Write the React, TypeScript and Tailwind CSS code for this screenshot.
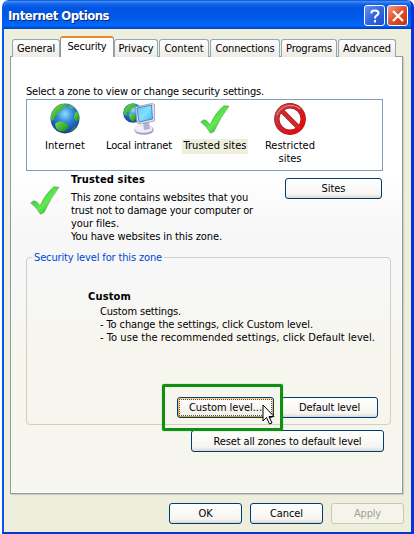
import React, { useLayoutEffect, useRef, useState } from "react";

/* Single line of dialog text, letter-spaced to fill a given pixel width. */
function Line({ w, children, className = "" }: { w: number; children: string; className?: string }) {
  const ref = useRef<HTMLSpanElement>(null);
  const [spacing, setSpacing] = useState(0);
  useLayoutEffect(() => {
    const el = ref.current;
    if (el) setSpacing((w - el.getBoundingClientRect().width) / children.length);
  }, []);
  return (
    <span ref={ref} className={`inline-block whitespace-pre ${className}`} style={{ letterSpacing: spacing }}>
      {children}
    </span>
  );
}

function Globe({ className = "" }: { className?: string }) {
  return (
    <svg viewBox="0 0 30 31" className={className}>
      <defs>
        <radialGradient id="sea" cx="0.5" cy="0.35" r="0.65">
          <stop offset="0" stopColor="#8fdcff" />
          <stop offset="0.45" stopColor="#2f86d8" />
          <stop offset="1" stopColor="#143c8c" />
        </radialGradient>
        <linearGradient id="land" x1="0" y1="0" x2="1" y2="1">
          <stop offset="0" stopColor="#7be04a" />
          <stop offset="1" stopColor="#128b1c" />
        </linearGradient>
      </defs>
      <ellipse cx="15" cy="15.5" rx="14.5" ry="15" fill="url(#sea)" />
      <path d="M1 12 Q4 3 12 1 L18 1.500 L16 4 L12 4 L13 7 L9 8 L8 11 L5 13 L4 17 L1 18Z" fill="url(#land)" />
      <path d="M19 1.500 L24 4 L22 6 L19 4Z" fill="#4dbb45" />
      <path d="M25 10 L27 8.500 L29.300 13 L29 17 L26 18 L24 15Z" fill="url(#land)" />
      <path d="M5 21 Q9 17.500 13 19 L18 21.500 L18 25 L14 28.500 L9 28 L6 25Z" fill="url(#land)" />
      <path d="M23 25 L26 22 L25 26 L20 29Z" fill="#278d38" />
    </svg>
  );
}

function Intranet() {
  return (
    <svg viewBox="0 0 32 32" className="h-8 w-8">
      <defs>
        <linearGradient id="screen" x1="0" y1="0" x2="1" y2="1">
          <stop offset="0" stopColor="#63bdf5" />
          <stop offset="0.5" stopColor="#85e0ff" />
          <stop offset="1" stopColor="#49b1ef" />
        </linearGradient>
      </defs>
      <circle cx="10" cy="10" r="9.800" fill="url(#sea)" />
      <path d="M1 8 Q4 0.500 11 0.500 L14 3 L9 5 L7 9 L4 9 L4 13 L1 12Z" fill="url(#land)" />
      <path d="M6 11 L11 11 L13 15 L10 19 L7 16Z" fill="url(#land)" />
      <ellipse cx="21" cy="27" rx="9.800" ry="4.800" fill="#a3a1c4" />
      <ellipse cx="20.500" cy="26" rx="9" ry="3.800" fill="#f1f0f8" />
      <path d="M20 19 L26 18 L27 26 L21 27Z" fill="#b4b1d2" />
      <path d="M12.500 4 L29 0.500 L31.500 1.500 L31.500 18 L16 21 L14 20Z" fill="#e4e4ef" stroke="#8a8bad" strokeWidth="0.700" />
      <path d="M14 5 L28.500 2 L29.500 16 L16 19Z" fill="url(#screen)" stroke="#2f75b9" strokeWidth="0.800" />
    </svg>
  );
}

function Check() {
  return (
    <svg viewBox="0 0 30 29" className="h-[29px] w-[30px]">
      <defs>
        <linearGradient id="tick" x1="0" y1="0" x2="1" y2="1">
          <stop offset="0" stopColor="#2fae2c" />
          <stop offset="0.55" stopColor="#5feb50" />
          <stop offset="1" stopColor="#25921f" />
        </linearGradient>
      </defs>
      <path
        d="M0.700 17 L4 14.700 Q7 15 10 20 Q16 7 24 0.800 L29 1.300 Q21 11 14 26.500 L10.500 28.200 Q6 20.500 0.700 17Z"
        fill="url(#tick)"
        stroke="#38a531"
        strokeWidth="0.6"
      />
    </svg>
  );
}

function Prohibited() {
  return (
    <svg viewBox="0 0 32 32" className="h-8 w-8">
      <defs>
        <linearGradient id="stop" x1="0" y1="0" x2="1" y2="1">
          <stop offset="0" stopColor="#c4454a" />
          <stop offset="0.5" stopColor="#cf2024" />
          <stop offset="1" stopColor="#f50000" />
        </linearGradient>
      </defs>
      <circle cx="16" cy="16" r="13.200" fill="#fff" stroke="#a81c20" strokeWidth="5.400" />
      <path d="M7 7 L25 25" stroke="#a81c20" strokeWidth="4.600" />
      <circle cx="16" cy="16" r="13.200" fill="none" stroke="url(#stop)" strokeWidth="4" />
      <path d="M6.500 6.500 L25.500 25.500" stroke="#d5262a" strokeWidth="3.200" />
      <path d="M2.800 12 Q6 4 15 2.500 Q22 2 26 6" fill="none" stroke="#e08a8c" strokeWidth="1.100" />
    </svg>
  );
}

function Tab({ label, w, className }: { label: string; w: number; className: string }) {
  return (
    <div
      className={`flex h-[18px] shrink-0 items-center justify-center rounded-t-[3px] border border-b-0 border-[#91a7b4] bg-linear-to-b from-white to-[#ecebe5] ${className}`}
    >
      <Line w={w}>{label}</Line>
    </div>
  );
}

function Button({ label, w, className = "" }: { label: string; w: number; className?: string }) {
  return (
    <button
      className={`flex shrink-0 items-center justify-center rounded-[3px] border border-[#003c74] bg-linear-to-b from-white via-[#f6f5f1] via-80% to-[#dcd8cf] ${className}`}
    >
      <Line w={w}>{label}</Line>
    </button>
  );
}

function Zone({ icon, children, className }: { icon: React.ReactNode; children: React.ReactNode; className: string }) {
  return (
    <div className={`flex shrink-0 flex-col items-center ${className}`}>
      <div className="flex h-9 items-start justify-center">{icon}</div>
      {children}
    </div>
  );
}

export default function App() {
  return (
    <div className="h-[534px] w-[414px] overflow-hidden bg-white pl-[2px] font-['DejaVu_Sans_Condensed','DejaVu_Sans',sans-serif] text-[11px] leading-[13px] text-black [font-stretch:condensed]">
      <div className="flex h-[534px] w-[412px] flex-col overflow-hidden rounded-t-[7px] border-x-2 border-b-2 border-r-[3px] border-l-[#0855ef] border-r-[#0734d5] border-b-[#0734d5] bg-[#edeedc]">
        <header className="-mx-[3px] flex h-[29px] shrink-0 items-center bg-[linear-gradient(180deg,#0847c5_0%,#3b8cf8_5%,#1264ea_14%,#0054e1_28%,#0059e8_60%,#0268fb_88%,#0050d8_95%,#003dbb_100%)] pt-[2px] pl-[7px]">
          <Line w={101} className="pt-px text-[13px] leading-4 font-bold text-white [text-shadow:1px_1px_#0a246a]">
            Internet Options
          </Line>
          <div className="ml-auto flex gap-[2px] pr-[6px]">
            <div className="flex h-[21px] w-[21px] items-center justify-center rounded-[3px] border border-white bg-linear-to-br from-[#6c91ef] via-[#3265df] to-[#1e50d0]">
              <svg viewBox="0 0 12 14" className="h-[14px] w-3" fill="none" stroke="white" strokeWidth="2">
                <path d="M2.500 4.500 V3 Q3 1.500 6 1.500 Q9.500 1.500 9.500 4 Q9.500 5.500 7.500 6.500 Q6 7.500 6 9.500 M6 11 V13.500" />
              </svg>
            </div>
            <div className="flex h-[21px] w-[21px] items-center justify-center rounded-[3px] border border-white bg-linear-to-br from-[#f09a7e] via-[#de4f2b] to-[#bd3514]">
              <svg viewBox="0 0 12 12" className="h-3 w-3" stroke="white" strokeWidth="2.200">
                <path d="M1 1 L11 11 M11 1 L1 11" />
              </svg>
            </div>
          </div>
        </header>

        <nav className="z-10 -mb-px flex h-7 shrink-0 items-end pl-2">
          <Tab label="General" w={38} className="w-12" />
          <div className="flex h-[21px] w-[54px] justify-center rounded-t-[3px] border-x border-t-2 border-x-[#919b9c] border-t-[#e68b2c] bg-white pt-[2px]">
            <Line w={39}>Security</Line>
          </div>
          <Tab label="Privacy" w={35} className="w-[44px]" />
          <Tab label="Content" w={39} className="ml-px w-[50px]" />
          <Tab label="Connections" w={59} className="ml-px w-[70px]" />
          <Tab label="Programs" w={46} className="ml-px w-[56px]" />
          <Tab label="Advanced" w={48} className="ml-px w-[58px]" />
        </nav>

        <main className="ml-[6px] flex h-[438px] w-[393px] shrink-0 flex-col border border-[#919b9c] bg-[linear-gradient(180deg,#fff_0%,#fff_27%,#f7f7f7_40%,#f7f7f7_52%,#f6f5ee_66%,#f6f5ee_100%)] pt-[28px] pl-[15px] shadow-[1px_1px_1px_#d0cebf,inset_0_0_0_1px_white]">
          <Line w={238} className="self-start">Select a zone to view or change security settings.</Line>

          <section className="mt-px flex h-[72px] w-[357px] shrink-0 items-start border border-[#7f9db9] bg-white pt-[3px]">
            <Zone icon={<Globe className="h-[31px] w-[30px]" />} className="ml-[15px] w-[46px]">
              <Line w={40}>Internet</Line>
            </Zone>
            <Zone icon={<Intranet />} className="ml-[15px] w-[72px]">
              <Line w={66}>Local intranet</Line>
            </Zone>
            <Zone icon={<div className="pt-[2px]"><Check /></div>} className="ml-[7px] w-[66px]">
              <div className="flex h-[15px] w-[66px] justify-center bg-[#edeedc]">
                <Line w={63}>Trusted sites</Line>
              </div>
            </Zone>
            <Zone icon={<Prohibited />} className="ml-[16px] w-[52px]">
              <Line w={50}>Restricted</Line>
              <Line w={23}>sites</Line>
            </Zone>
          </section>

          <section className="flex h-[80px] shrink-0">
            <div className="w-[45px] shrink-0 pt-[15px] pl-[4px]">
              <Check />
            </div>
            <div className="flex w-[214px] shrink-0 flex-col items-start pt-[2px]">
              <Line w={74} className="mb-[5px] font-bold">Trusted sites</Line>
              <Line w={177}>This zone contains websites that you</Line>
              <Line w={182}>trust not to damage your computer or</Line>
              <Line w={48}>your files.</Line>
              <Line w={151}>You have websites in this zone.</Line>
            </div>
            <Button label="Sites" w={24} className="mt-[7px] h-[21px] w-[97px]" />
          </section>

          <fieldset className="h-[174px] w-[365px] shrink-0 rounded-[4px] border border-[#d0d0bf]">
            <legend className="ml-[5px] px-[2px] text-[#0046d5]">
              <Line w={128}>Security level for this zone</Line>
            </legend>
            <div className="flex flex-col items-start pt-[26px] pl-[61px]">
              <Line w={43} className="mb-[2px] font-bold">Custom</Line>
              <div className="flex flex-col items-start pl-3">
                <Line w={81}>Custom settings.</Line>
                <Line w={213}>- To change the settings, click Custom level.</Line>
                <Line w={275}>- To use the recommended settings, click Default level.</Line>
              </div>
            </div>
            <div className="mt-[40px] flex h-[46px] items-center pl-[135px]">
              <div className="relative z-10 flex h-[47px] w-[121px] shrink-0 items-center rounded-[2px] border-[3px] border-[#109010] pl-3 shadow-[0_0_1px_#109010]">
                <div className="h-[21px] w-[97px] rounded-[3px] border border-[#003c74] bg-linear-to-b from-[#fbd28b] to-[#e49a20] p-[1px]">
                  <div className="flex h-[17px] items-center justify-center border border-dotted border-[#5a4a40] bg-linear-to-b from-white to-[#f1efe9]">
                    <Line w={73}>Custom level...</Line>
                  </div>
                </div>
                <svg viewBox="0 0 13 21" className="absolute top-[17px] left-[97px] h-[21px] w-[13px]">
                  <path d="M1 1 V17 L4.500 13.500 L7.500 20 L10 19 L7 12.500 H12Z" fill="white" stroke="black" />
                </svg>
              </div>
              <Button label="Default level" w={61} className="-ml-[2px] h-[21px] w-[97px]" />
            </div>
          </fieldset>
          <Button label="Reset all zones to default level" w={148} className="mt-[5px] ml-[165px] h-[22px] w-[193px]" />
        </main>

        <footer className="mt-[9px] flex shrink-0 gap-2 pl-[165px]">
          <Button label="OK" w={14} className="h-[21px] w-[73px]" />
          <Button label="Cancel" w={33} className="h-[21px] w-[73px]" />
          <button className="flex h-[21px] w-[73px] items-center justify-center rounded-[3px] border border-[#c9c7ba] bg-[#f5f4ea] text-[#a1a192]">
            <Line w={27}>Apply</Line>
          </button>
        </footer>
      </div>
    </div>
  );
}
